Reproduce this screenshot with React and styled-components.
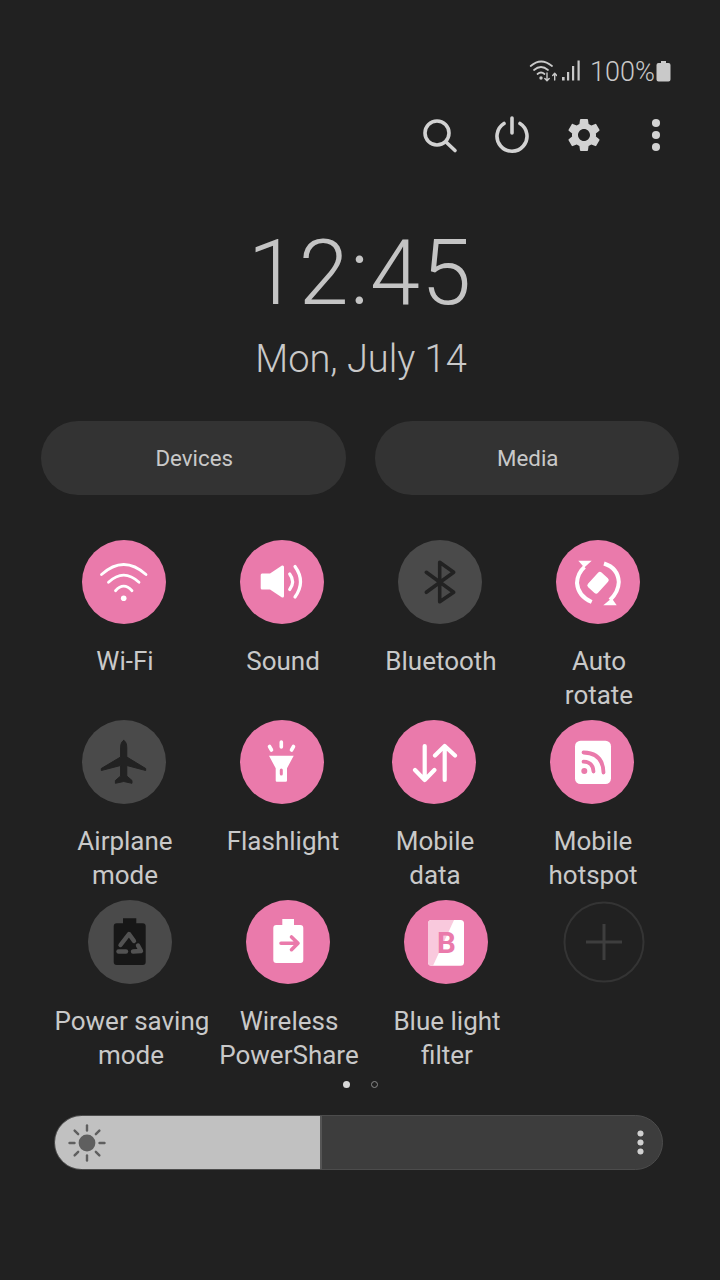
import styled, { createGlobalStyle } from "styled-components";
import { MdSettings } from "react-icons/md";

const PINK = "#ea7aab";
const DARK = "#222222";

const Global = createGlobalStyle`
    html, body{
        margin: 0;
        padding: 0;
        background: #212121;
    }
    *{
        box-sizing: border-box;
    }
`
const Page = styled.div`
    width: 720px;
    height: 1280px;
    padding-top: 54px;
    background: #212121;
    color: #c9c9c9;
    font-family: Roboto, "Liberation Sans", sans-serif;
    overflow: hidden;
`
const StatusBar = styled.div`
    height: 34px;
    padding-right: 49px;
    display: flex;
    justify-content: flex-end;
    align-items: center;
`
const StatusText = styled.span`
    font-size: 27px;
    font-weight: 300;
    line-height: 34px;
    margin: 1px 1px 0 9px;
`
const StatusGap = styled.span`
    width: 4px;
`
const Toolbar = styled.div`
    height: 72px;
    margin-top: 11px;
    padding-right: 28px;
    display: flex;
    justify-content: flex-end;
`
const ToolButton = styled.div`
    width: 72px;
    height: 72px;
    display: flex;
    justify-content: center;
    align-items: center;
    color: #d2d2d2;
`
const Clock = styled.div`
    margin-top: 53px;
    font-size: 90px;
    font-weight: 300;
    letter-spacing: 1.2px;
    line-height: 100px;
    text-align: center;
    color: #c4c4c4;
`
const DateLine = styled.div`
    margin-top: 13px;
    padding-left: 2px;
    font-size: 38px;
    font-weight: 300;
    line-height: 44px;
    text-align: center;
`
const Pills = styled.div`
    margin-top: 40px;
    padding-left: 41px;
    display: flex;
    gap: 29px;
`
const Pill = styled.div`
    width: 304.5px;
    height: 74px;
    padding-left: 2px;
    border-radius: 37px;
    background: #333333;
    display: flex;
    justify-content: center;
    align-items: center;
    font-size: 22.3px;
`
const Grid = styled.div`
    margin-top: 45px;
`
const Row = styled.div`
    height: 180px;
    padding-left: ${(props) => props.$inset}px;
    display: flex;
`
const Cell = styled.div`
    width: 158px;
    margin-left: ${(props) => props.$nudge || 0}px;
    display: flex;
    flex-direction: column;
    align-items: center;
`
const Round = styled.div`
    width: 84px;
    height: 84px;
    border-radius: 50%;
    background: ${(props) => (props.$on ? PINK : "#4a4a4a")};
    svg{
        display: block;
    }
`
const AddRound = styled.div`
    width: 84px;
    height: 84px;
    svg{
        display: block;
    }
`
const Label = styled.div`
    width: 153px;
    margin: 20px 0 0 2px;
    font-size: 26px;
    line-height: 34px;
    text-align: center;
    white-space: nowrap;
    overflow: hidden;
`
const Pager = styled.div`
    height: 8px;
    display: flex;
    justify-content: center;
    align-items: center;
    gap: 21px;
`
const Dot = styled.span`
    width: 7px;
    height: 7px;
    border-radius: 50%;
    background: ${(props) => (props.$active ? "#d8d8d8" : "transparent")};
    border: ${(props) => (props.$active ? "none" : "1.5px solid #8a8a8a")};
`
const Slider = styled.div`
    width: 609px;
    height: 55px;
    margin: 27px 0 0 54px;
    border-radius: 28px;
    border: 1px solid #4c4c4c;
    background: #3d3d3d;
    display: flex;
    overflow: hidden;
`
const SliderFill = styled.div`
    width: ${(props) => props.$value}px;
    height: 100%;
    padding-left: 10px;
    background: #c1c1c1;
    border-right: 2px solid #555555;
    display: flex;
    align-items: center;
`
const SliderRest = styled.div`
    flex: 1;
    padding-right: 17px;
    display: flex;
    justify-content: flex-end;
    align-items: center;
`

const Art = ({ children }) => (
    <svg width="84" height="84" viewBox="0 0 84 84" fill="none" strokeLinecap="round" strokeLinejoin="round">
        {children}
    </svg>
);

function Wifi(){
    return <Art>
        <g stroke="#fff" strokeWidth="2.8">
            <path d="M19.5 34.5Q41.7 14.5 64 34.5" />
            <path d="M26.5 42.3Q41.7 28 57 42.3" />
            <path d="M33.5 50.7Q41.7 41.5 50 50.7" />
        </g>
        <circle cx="41.7" cy="58.3" r="2.8" fill="#fff" />
    </Art>;
}
function Sound(){
    return <Art>
        <path d="M22 33.5H30L42 25.5Q44 25 44 27V56Q44 58 42 57.5L30 49.5H22Q20.7 49.5 20.7 48V35Q20.7 33.5 22 33.5Z" fill="#fff" />
        <g stroke="#fff" strokeWidth="3.2">
            <path d="M49.7 34Q55.5 41.7 49.7 49.5" />
            <path d="M55 26.5Q66 41.7 55 57" />
        </g>
    </Art>;
}
function Bluetooth(){
    return <Art>
        <path d="M28.3 32.3L55.7 52.3L41.7 61.7V22.3L55.7 32.3L28.3 52.3" stroke={DARK} strokeWidth="3.6" />
    </Art>;
}
function Rotate(){
    return <Art>
        <rect x="32" y="36" width="20" height="13.5" rx="2.5" fill="#fff" transform="rotate(-48 42 42.7)" />
        <g stroke="#fff" strokeWidth="4" strokeLinecap="butt">
            <path d="M28.5 27Q21.5 33 21 43Q22 56 35.7 62" />
            <path d="M48 23.5Q62 28 62.8 42Q62.5 52 54 60" />
        </g>
        <path d="M22.3 20.7H35.7L28.3 27.5Z" fill="#fff" />
        <path d="M60.7 65.3H47.3L55.7 58.3Z" fill="#fff" />
    </Art>;
}
function Airplane(){
    return <Art>
        <path d="M41.7 20.5Q44.8 21.5 44.8 28V37L63.7 48.5V50.5L44.8 45.5V56L50 60.5V63.3L41.7 61.5L33.4 63.3V60.5L38.6 56V45.5L19.3 50.5V48.5L38.6 37V28Q38.6 21.5 41.7 20.5Z" fill={DARK} stroke={DARK} strokeWidth="1" />
    </Art>;
}
function Flashlight(){
    return <Art>
        <g stroke="#fff" strokeWidth="3.6">
            <path d="M41.3 22V27" />
            <path d="M29.5 26.5L31.5 30" />
            <path d="M53.5 26.5L51.5 30" />
        </g>
        <path d="M29 35.7H53.7L47 48.3V60.5Q47 61.7 45.8 61.7H36.9Q35.7 61.7 35.7 60.5V48.3Z" fill="#fff" />
        <rect x="39.8" y="48.5" width="3" height="7" rx="1.5" fill={PINK} />
    </Art>;
}
function MobileData(){
    return <Art>
        <g stroke="#fff" strokeWidth="4.2">
            <path d="M32.7 26V60M23 50L32.7 60L42.4 50" />
            <path d="M52.7 60V26M43 35.5L52.7 26L63 35.5" />
        </g>
    </Art>;
}
function Hotspot(){
    return <Art>
        <rect x="25" y="20.7" width="36" height="43.3" rx="5.5" fill="#fff" />
        <g stroke={PINK} strokeWidth="3.8">
            <path d="M33.5 41.7Q43 42 43.5 51.5" />
            <path d="M33.5 32.5Q53 33 53.5 52.5" />
        </g>
        <circle cx="34.3" cy="51" r="3" fill={PINK} />
    </Art>;
}
function PowerSaving(){
    return <Art>
        <path d="M35 18.3H48.3V23.3H54.7Q57.7 23.3 57.7 26.3V62Q57.7 65 54.7 65H28.7Q25.7 65 25.7 62V26.3Q25.7 23.3 28.7 23.3H35Z" fill="#171717" />
        <g stroke="#525252" strokeWidth="4.4">
            <path d="M32.5 45L41 34L46 41" />
            <path d="M50 45.5L53 51L45 51.5" />
            <path d="M38 51.5H30.5" />
        </g>
    </Art>;
}
function PowerShare(){
    return <Art>
        <path d="M36.3 19H48V25H54.3Q57.3 25 57.3 28V60Q57.3 63 54.3 63H30.3Q27.3 63 27.3 60V28Q27.3 25 30.3 25H36.3Z" fill="#fff" />
        <path d="M35 43.3H51M45.5 37L52 43.3L45.5 49.7" stroke={PINK} strokeWidth="3.6" />
    </Art>;
}
function BlueLight(){
    return <Art>
        <rect x="24" y="20" width="36" height="45.7" rx="3.5" fill="#fff" />
        <path d="M50 20H27.5Q24 20 24 23.5V62Q24 65.7 27.5 65.7H29Z" fill="#f9c9dd" />
        <text x="42.5" y="53" textAnchor="middle" fontFamily="Roboto, sans-serif" fontWeight="700" fontSize="29.5" fill={PINK}>B</text>
    </Art>;
}
function AddTile(){
    return <Art>
        <circle cx="42" cy="42" r="39.5" stroke="#343434" strokeWidth="2" />
        <path d="M24 42H60M42 24V60" stroke="#3e3e3e" strokeWidth="3" strokeLinecap="butt" />
    </Art>;
}

function StatusWifi(){
    return <svg width="28" height="24" viewBox="0 0 28 24" fill="none" strokeLinecap="round" strokeLinejoin="round">
        <g stroke="#c9c9c9" strokeWidth="1.7">
            <path d="M1.7 7Q12 -2 23 7" />
            <path d="M5 11Q12 5 19 11" />
            <path d="M8.5 15Q12 12 15.5 15" />
        </g>
        <circle cx="12" cy="19" r="1.7" fill="#c9c9c9" />
        <path d="M18 14V21.5M15.8 19.5L18 21.8L20.2 19.5M25.7 21V14.5M23.7 16.5L25.7 14.3L27.7 16.5" stroke="#c9c9c9" strokeWidth="1.4" />
    </svg>;
}
function StatusSignal(){
    return <svg width="20" height="22" viewBox="0 0 20 22" fill="#c9c9c9">
        <rect x="1" y="17" width="2.6" height="3.5" />
        <rect x="6" y="12" width="2.2" height="8.5" />
        <rect x="11" y="6" width="2.2" height="14.5" />
        <rect x="16.5" y="0.5" width="2.2" height="20" />
    </svg>;
}
function StatusBattery(){
    return <svg width="15" height="22" viewBox="0 0 15 22" fill="#c9c9c9">
        <path d="M5 1H10V3H12.5Q14.5 3 14.5 5V19.5Q14.5 21.5 12.5 21.5H2.5Q0.5 21.5 0.5 19.5V5Q0.5 3 2.5 3H5Z" />
    </svg>;
}
function SearchIcon(){
    return <svg width="40" height="40" viewBox="0 0 40 40" fill="none" stroke="currentColor" strokeWidth="3.6" strokeLinecap="round">
        <circle cx="17" cy="18" r="12" />
        <path d="M26 27L35 35.5" />
    </svg>;
}
function PowerIcon(){
    return <svg width="40" height="40" viewBox="0 0 40 40" fill="none" stroke="currentColor" strokeWidth="3.6" strokeLinecap="round">
        <path d="M12 8.5A15 15 0 1 0 28 8.5" />
        <path d="M20 3V18" />
    </svg>;
}
function DotsIcon({ size, color }){
    return <svg width={size} height={size * 3} viewBox="0 0 8 24" fill={color}>
        <circle cx="4" cy="4" r="2.7" />
        <circle cx="4" cy="12" r="2.7" />
        <circle cx="4" cy="20" r="2.7" />
    </svg>;
}
function SunIcon(){
    const rays = [0, 45, 90, 135, 180, 225, 270, 315];
    return <svg width="44" height="44" viewBox="0 0 44 44" fill="none">
        <circle cx="22" cy="22" r="8.4" fill="#5f5f5f" />
        {rays.map((angle) => (
            <path key={angle} d="M22 4.5V9.5" stroke="#5f5f5f" strokeWidth="2.4" strokeLinecap="round" transform={`rotate(${angle} 22 22)`} />
        ))}
    </svg>;
}

const rows = [
    { inset: 45, tiles: [
        { label: ["Wi-Fi"], on: true, icon: <Wifi /> },
        { label: ["Sound"], on: true, icon: <Sound /> },
        { label: ["Bluetooth"], icon: <Bluetooth /> },
        { label: ["Auto", "rotate"], on: true, icon: <Rotate /> },
    ]},
    { inset: 45, tiles: [
        { label: ["Airplane", "mode"], icon: <Airplane /> },
        { label: ["Flashlight"], on: true, icon: <Flashlight /> },
        { label: ["Mobile", "data"], on: true, nudge: -6, icon: <MobileData /> },
        { label: ["Mobile", "hotspot"], on: true, icon: <Hotspot /> },
    ]},
    { inset: 51, tiles: [
        { label: ["Power saving", "mode"], icon: <PowerSaving /> },
        { label: ["Wireless", "PowerShare"], on: true, icon: <PowerShare /> },
        { label: ["Blue light", "filter"], on: true, icon: <BlueLight /> },
    ]},
];

export default function App(){
    return <>
        <Global />
        <Page>
            <StatusBar>
                <StatusWifi />
                <StatusGap />
                <StatusSignal />
                <StatusText>100%</StatusText>
                <StatusBattery />
            </StatusBar>
            <Toolbar>
                <ToolButton><SearchIcon /></ToolButton>
                <ToolButton><PowerIcon /></ToolButton>
                <ToolButton><MdSettings size={40} /></ToolButton>
                <ToolButton><DotsIcon size={12} color="#d2d2d2" /></ToolButton>
            </Toolbar>
            <Clock>12:45</Clock>
            <DateLine>Mon, July 14</DateLine>
            <Pills>
                <Pill>Devices</Pill>
                <Pill>Media</Pill>
            </Pills>
            <Grid>
                {rows.map((row, r) => (
                    <Row key={r} $inset={row.inset}>
                        {row.tiles.map((tile) => (
                            <Cell key={tile.label[0]} $nudge={tile.nudge}>
                                <Round $on={tile.on}>{tile.icon}</Round>
                                <Label>
                                    {tile.label.map((line) => <div key={line}>{line}</div>)}
                                </Label>
                            </Cell>
                        ))}
                        {r === 2 && <Cell><AddRound><AddTile /></AddRound></Cell>}
                    </Row>
                ))}
            </Grid>
            <Pager>
                <Dot $active />
                <Dot />
            </Pager>
            <Slider>
                <SliderFill $value={267}><SunIcon /></SliderFill>
                <SliderRest><DotsIcon size={9} color="#d0d0d0" /></SliderRest>
            </Slider>
        </Page>
    </>;
}
